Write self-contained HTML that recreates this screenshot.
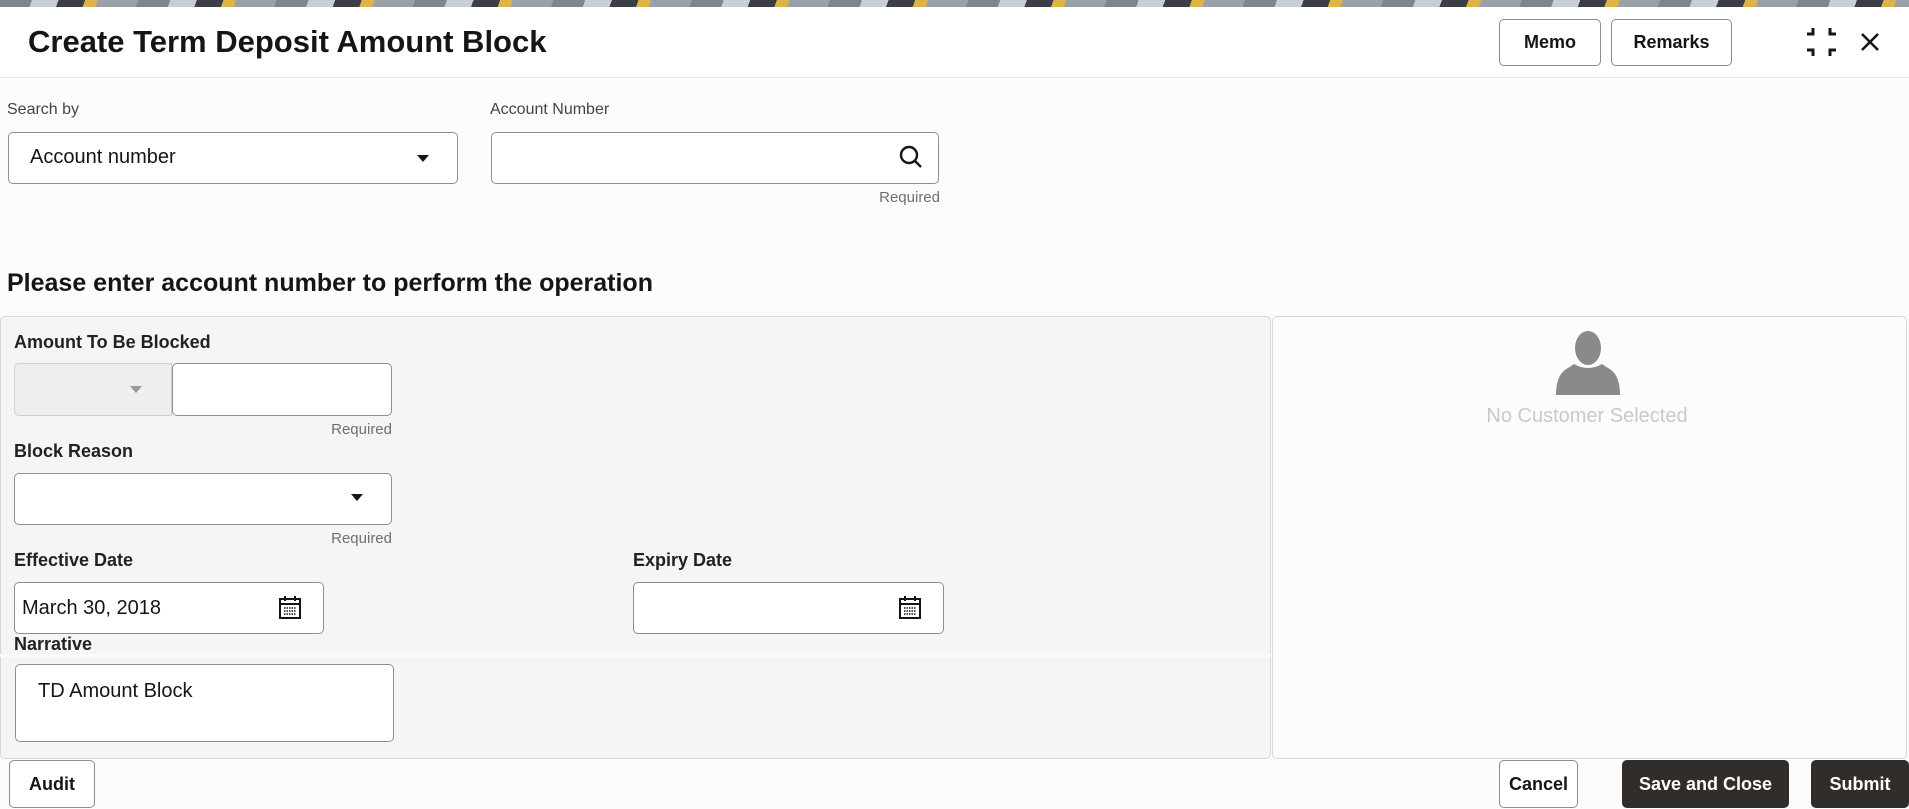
<!DOCTYPE html>
<html><head><meta charset="utf-8"><style>
*{box-sizing:border-box;margin:0;padding:0}
body{width:1909px;height:809px;overflow:hidden;background:#fcfcfc;font-family:"Liberation Sans",sans-serif;color:#161513;position:relative}
.a{position:absolute}
.strip{left:0;top:0;width:1909px;height:7px;background:repeating-linear-gradient(110deg,#7d8590 0 30px,#c9ced4 30px 55px,#3b3f45 55px 80px,#e0b347 80px 92px,#9aa1a9 92px 130px)}
.hdr{left:0;top:7px;width:1909px;height:71px;background:#fff;border-bottom:1px solid #e4e4e4}
.btn{position:absolute;border:1px solid #8c8c8c;border-radius:5px;background:#fff;font-size:18px;font-weight:bold;color:#161513;display:flex;align-items:center;justify-content:center}
.dark{background:#312d2a;color:#fff;border-color:#312d2a}
.lbl{position:absolute;font-size:16px;color:#444}
.flbl{position:absolute;font-size:18px;font-weight:bold;color:#222}
.inp{position:absolute;background:#fff;border:1px solid #8f8f8f;border-radius:5px}
.req{position:absolute;font-size:15px;color:#6f6f6f;text-align:right}
.tri{position:absolute;width:0;height:0;border-left:6px solid transparent;border-right:6px solid transparent;border-top:7px solid #161513}
</style></head><body>
<div class="a strip"></div>
<div class="a hdr"></div>
<div class="a" style="left:28px;top:24px;font-size:31px;font-weight:bold">Create Term Deposit Amount Block</div>
<div class="btn" style="left:1499px;top:19px;width:102px;height:47px">Memo</div>
<div class="btn" style="left:1611px;top:19px;width:121px;height:47px">Remarks</div>
<svg class="a" style="left:1806px;top:26px" width="32" height="32" viewBox="0 0 32 32" fill="none" stroke="#161513" stroke-width="3"><path d="M7 2v6H1M24 2v6h6M7 30v-6H1M24 30v-6h6"/></svg>
<svg class="a" style="left:1860px;top:32px" width="20" height="20" viewBox="0 0 20 20" stroke="#161513" stroke-width="2.6"><path d="M2 2L18 18M18 2L2 18"/></svg>

<div class="lbl" style="left:7px;top:101px">Search by</div>
<div class="inp" style="left:8px;top:132px;width:450px;height:52px"></div>
<div class="a" style="left:30px;top:146px;font-size:20px">Account number</div>
<div class="tri" style="left:417px;top:155px"></div>
<div class="lbl" style="left:490px;top:101px">Account Number</div>
<div class="inp" style="left:491px;top:132px;width:448px;height:52px"></div>
<svg class="a" style="left:898px;top:144px" width="26" height="26" viewBox="0 0 26 26" fill="none" stroke="#161513" stroke-width="2.4"><circle cx="11" cy="11" r="8"/><path d="M17 17l6 6"/></svg>
<div class="req" style="left:800px;top:189px;width:140px">Required</div>

<div class="a" style="left:7px;top:269px;font-size:25px;font-weight:bold">Please enter account number to perform the operation</div>

<div class="a" style="left:0;top:316px;width:1271px;height:443px;background:#f5f5f5;border:1px solid #d8d8d8;border-radius:5px"></div>
<div class="a" style="left:0;top:654px;width:1271px;height:3px;background:#fafafa"></div>
<div class="a" style="left:1272px;top:316px;width:635px;height:443px;border:1px solid #d8d8d8;border-radius:5px;background:rgba(252,252,252,.6)"></div>

<div class="flbl" style="left:14px;top:332px">Amount To Be Blocked</div>
<div class="a" style="left:14px;top:363px;width:158px;height:53px;background:#eee;border:1px solid #d0d0d0;border-radius:5px 0 0 5px"></div>
<div class="tri" style="left:130px;top:386px;border-top-color:#999"></div>
<div class="inp" style="left:172px;top:363px;width:220px;height:53px"></div>
<div class="req" style="left:250px;top:421px;width:142px">Required</div>

<div class="flbl" style="left:14px;top:441px">Block Reason</div>
<div class="inp" style="left:14px;top:473px;width:378px;height:52px"></div>
<div class="tri" style="left:351px;top:494px"></div>
<div class="req" style="left:250px;top:530px;width:142px">Required</div>

<div class="flbl" style="left:14px;top:550px">Effective Date</div>
<div class="inp" style="left:14px;top:582px;width:310px;height:52px"></div>
<div class="a" style="left:22px;top:597px;font-size:20px">March 30, 2018</div>
<div class="flbl" style="left:633px;top:550px">Expiry Date</div>
<div class="inp" style="left:633px;top:582px;width:311px;height:52px"></div>
<svg class="a" style="left:278px;top:594px" width="24" height="26" viewBox="0 0 24 26" fill="none" stroke="#161513" stroke-width="2"><rect x="2" y="5" width="20" height="19"/><path d="M2 10h20M7 2v5M17 2v5" /><path d="M6 14h12M6 17h12M6 20h12" stroke-width="1.5" stroke-dasharray="1.5 1"/></svg>
<svg class="a" style="left:898px;top:594px" width="24" height="26" viewBox="0 0 24 26" fill="none" stroke="#161513" stroke-width="2"><rect x="2" y="5" width="20" height="19"/><path d="M2 10h20M7 2v5M17 2v5" /><path d="M6 14h12M6 17h12M6 20h12" stroke-width="1.5" stroke-dasharray="1.5 1"/></svg>

<div class="flbl" style="left:14px;top:634px">Narrative</div>
<div class="inp" style="left:15px;top:664px;width:379px;height:78px"></div>
<div class="a" style="left:38px;top:680px;font-size:20px">TD Amount Block</div>

<svg class="a" style="left:1554px;top:330px" width="68" height="66" viewBox="0 0 68 66" fill="#8a8a8a"><ellipse cx="34" cy="18" rx="13" ry="17"/><path d="M20 34q14 8 28 0l6 4q12 6 12 27H2q0-21 12-27z"/></svg>
<div class="a" style="left:1387px;top:405px;width:400px;text-align:center;font-size:20px;color:#c9c9c9">No Customer Selected</div>

<div class="btn" style="left:9px;top:760px;width:86px;height:48px">Audit</div>
<div class="btn" style="left:1499px;top:760px;width:79px;height:48px">Cancel</div>
<div class="btn dark" style="left:1622px;top:760px;width:167px;height:48px">Save and Close</div>
<div class="btn dark" style="left:1811px;top:760px;width:98px;height:48px">Submit</div>
</body></html>
